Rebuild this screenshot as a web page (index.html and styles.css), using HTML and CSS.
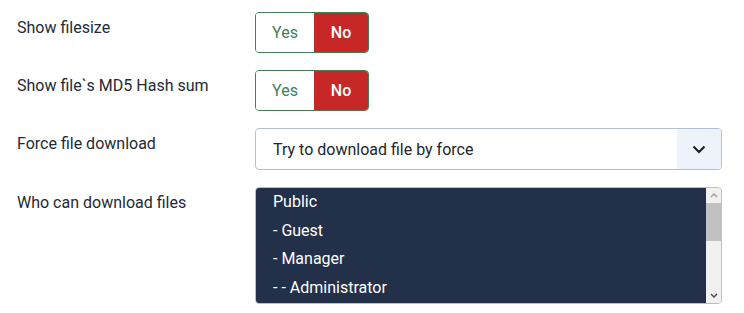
FILE: index.html
```html
<!DOCTYPE html>
<html lang="en">
<head>
  <meta charset="UTF-8" />
  <title>Download options</title>
  <link rel="stylesheet" href="styles.css">
</head>
<body>

  <div class="form">
    <div class="row">
      <div class="label">Show filesize</div>
      <div class="toggle">
        <span class="opt yes">Yes</span>
        <span class="opt no active">No</span>
      </div>
    </div>

    <div class="row">
      <div class="label">Show file`s MD5 Hash sum</div>
      <div class="toggle">
        <span class="opt yes">Yes</span>
        <span class="opt no active">No</span>
      </div>
    </div>

    <div class="row">
      <div class="label">Force file download</div>
      <div class="select">
        <span class="value">Try to download file by force</span>
        <span class="caret">
          <svg width="14" height="9" viewBox="0 0 14 9"><path d="M1.5 1.5 7 7l5.5-5.5" fill="none" stroke="#1b1b1b" stroke-width="2"/></svg>
        </span>
      </div>
    </div>

    <div class="row">
      <div class="label">Who can download files</div>
      <div class="listbox">
        <ul class="options">
          <li>Public</li>
          <li>- Guest</li>
          <li>- Manager</li>
          <li>- - Administrator</li>
        </ul>
        <div class="scrollbar">
          <span class="arrow">
            <svg width="8" height="5" viewBox="0 0 8 5"><path d="M1 4 4 1l3 3" fill="none" stroke="#a3a3a3" stroke-width="1.5"/></svg>
          </span>
          <div class="track"><div class="thumb"></div></div>
          <span class="arrow">
            <svg width="8" height="5" viewBox="0 0 8 5"><path d="M1 1l3 3 3-3" fill="none" stroke="#505050" stroke-width="1.5"/></svg>
          </span>
        </div>
      </div>
    </div>
  </div>

</body>
</html>
```

FILE: styles.css
```css
body {
  margin: 0;
  padding: 0;
  background: white;
  color: #22262a;
  font-family: Roboto, "Liberation Sans", Arial, sans-serif;
  font-size: 16px;
}

.form {
  padding: 12px 22px 0 17px;
  display: flex;
  flex-direction: column;
  gap: 17px;
}

.row {
  display: flex;
  align-items: flex-start;
}

.label {
  width: 238px;
  padding-top: 6px;
  line-height: 20px;
  color: #242a35;
}

.toggle {
  display: flex;
  height: 41px;
  width: 114px;
  box-sizing: border-box;
  border: 1px solid #457d54;
  border-radius: 4px;
  overflow: hidden;
}

.opt {
  display: flex;
  align-items: center;
  justify-content: center;
  font-size: 16px;
}

.yes {
  width: 58px;
  color: #457d54;
  background: white;
}

.no {
  flex: 1;
  color: white;
  font-weight: 500;
  background: #c52827;
}

.select {
  display: flex;
  height: 42px;
  width: 467px;
  box-sizing: border-box;
  border: 1px solid #b5c0cf;
  border-radius: 4px;
  overflow: hidden;
  font-size: 16px;
}

.select .value {
  flex: 1;
  display: flex;
  align-items: center;
  padding-left: 17px;
  color: #22262a;
}

.select .caret {
  width: 44px;
  display: flex;
  align-items: center;
  justify-content: center;
  background: #eef2f9;
}

.listbox {
  display: flex;
  height: 117px;
  width: 467px;
  box-sizing: border-box;
  border: 1px solid #b5c0cf;
  border-radius: 4px;
  overflow: hidden;
}

.options {
  flex: 1;
  margin: 0;
  padding: 0;
  list-style: none;
  background: #22304a;
  color: white;
  font-size: 16px;
}

.options li {
  height: 28.7px;
  line-height: 28.7px;
  padding-left: 17px;
}

.scrollbar {
  width: 15px;
  display: flex;
  flex-direction: column;
  background: #f1f1f1;
}

.arrow {
  height: 15px;
  display: flex;
  align-items: center;
  justify-content: center;
}

.track {
  flex: 1;
}

.thumb {
  height: 38px;
  background: #c1c1c1;
}
```
